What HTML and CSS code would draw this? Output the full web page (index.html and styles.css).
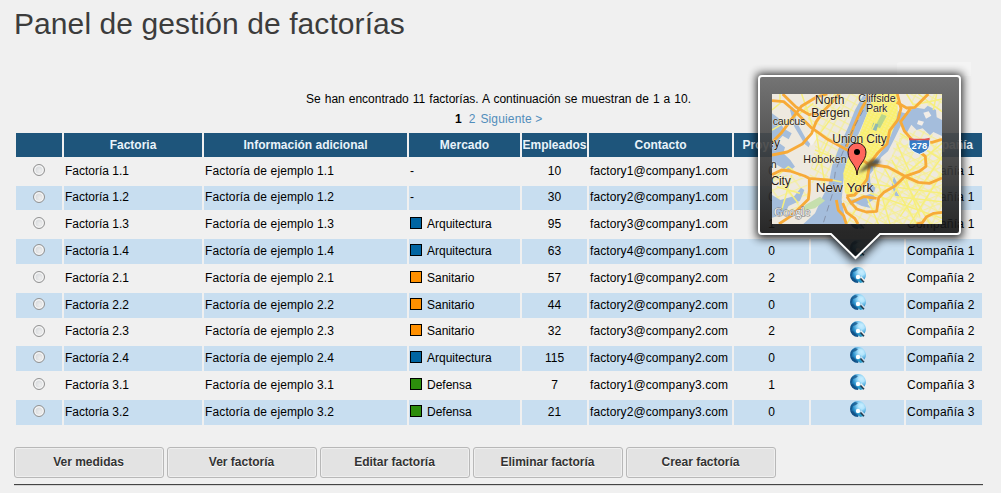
FILE: index.html
```
<!DOCTYPE html>
<html lang="es">
<head>
<meta charset="utf-8">
<title>Panel de gestión de factorías</title>
<link rel="stylesheet" href="styles.css">
</head>
<body>
<svg class="defs" width="0" height="0" aria-hidden="true">
  <defs>
    <radialGradient id="sphere" cx=".72" cy=".3" r=".8">
      <stop offset="0" stop-color="#d4f3ff"/><stop offset=".35" stop-color="#8ed2f4"/><stop offset=".65" stop-color="#2b91cc"/><stop offset="1" stop-color="#063f76"/>
    </radialGradient>
    <symbol id="globe" viewBox="0 0 16 16">
      <path d="M8 0a8 8 0 0 1 6.500 12.500L11 9 8 16A8 8 0 0 1 8 0z" fill="url(#sphere)"/>
      <path d="M1 4 5 1l3 1-2 2-3 1-1 3-1 1zM1 11l2-1 3 3 2 2-4-1z" fill="#124f83" opacity=".7"/>
      <path d="M9 2l4 1 2 4-3 2-4-3z" fill="#bdeaff" opacity=".65"/>
      <path d="M7 12 10 16 14 15 10 11z" fill="#2a9ccd"/>
      <circle cx="8" cy="10" r="2.200" fill="#fff"/>
      <path d="M10.500 11.500 14 15.200" stroke="#263a4b" stroke-width="1.500"/>
    </symbol>
  </defs>
</svg>
<main class="page">
  <h1 class="title">Panel de gestión de factorías</h1>
  <p class="summary">Se han encontrado 11 factorías. A continuación se muestran de 1 a 10.</p>
  <nav class="pager"><b>1</b><a>2</a><a>Siguiente &gt;</a></nav>
  <table class="grid">
    <colgroup><col class="c-radio"><col class="c-name"><col class="c-info"><col class="c-market"><col class="c-staff"><col class="c-mail"><col class="c-projects"><col class="c-place"><col class="c-company"></colgroup>
    <thead><tr><th></th><th>Factoria</th><th>Información adicional</th><th>Mercado</th><th>Empleados</th><th>Contacto</th><th>Proyectos</th><th></th><th>Compañía</th></tr></thead>
    <tbody>
      <tr><td><input type="radio" name="f"></td><td>Factoría 1.1</td><td>Factoría de ejemplo 1.1</td><td>-</td><td>10</td><td>factory1@company1.com</td><td>0</td><td><svg class="globe"><use href="#globe"/></svg></td><td>Compañía 1</td></tr>
      <tr class="short"><td><input type="radio" name="f"></td><td>Factoría 1.2</td><td>Factoría de ejemplo 1.2</td><td>-</td><td>30</td><td>factory2@company1.com</td><td>0</td><td><svg class="globe"><use href="#globe"/></svg></td><td>Compañía 1</td></tr>
      <tr><td><input type="radio" name="f"></td><td>Factoría 1.3</td><td>Factoría de ejemplo 1.3</td><td><i class="swatch blue"></i>Arquitectura</td><td>95</td><td>factory3@company1.com</td><td>1</td><td><svg class="globe"><use href="#globe"/></svg></td><td>Compañía 1</td></tr>
      <tr><td><input type="radio" name="f"></td><td>Factoría 1.4</td><td>Factoría de ejemplo 1.4</td><td><i class="swatch blue"></i>Arquitectura</td><td>63</td><td>factory4@company1.com</td><td>0</td><td><svg class="globe"><use href="#globe"/></svg></td><td>Compañía 1</td></tr>
      <tr><td><input type="radio" name="f"></td><td>Factoría 2.1</td><td>Factoría de ejemplo 2.1</td><td><i class="swatch orange"></i>Sanitario</td><td>57</td><td>factory1@company2.com</td><td>2</td><td><svg class="globe"><use href="#globe"/></svg></td><td>Compañía 2</td></tr>
      <tr><td><input type="radio" name="f"></td><td>Factoría 2.2</td><td>Factoría de ejemplo 2.2</td><td><i class="swatch orange"></i>Sanitario</td><td>44</td><td>factory2@company2.com</td><td>0</td><td><svg class="globe"><use href="#globe"/></svg></td><td>Compañía 2</td></tr>
      <tr class="short"><td><input type="radio" name="f"></td><td>Factoría 2.3</td><td>Factoría de ejemplo 2.3</td><td><i class="swatch orange"></i>Sanitario</td><td>32</td><td>factory3@company2.com</td><td>2</td><td><svg class="globe"><use href="#globe"/></svg></td><td>Compañía 2</td></tr>
      <tr><td><input type="radio" name="f"></td><td>Factoría 2.4</td><td>Factoría de ejemplo 2.4</td><td><i class="swatch blue"></i>Arquitectura</td><td>115</td><td>factory4@company2.com</td><td>0</td><td><svg class="globe"><use href="#globe"/></svg></td><td>Compañía 2</td></tr>
      <tr><td><input type="radio" name="f"></td><td>Factoría 3.1</td><td>Factoría de ejemplo 3.1</td><td><i class="swatch green"></i>Defensa</td><td>7</td><td>factory1@company3.com</td><td>1</td><td><svg class="globe"><use href="#globe"/></svg></td><td>Compañía 3</td></tr>
      <tr><td><input type="radio" name="f"></td><td>Factoría 3.2</td><td>Factoría de ejemplo 3.2</td><td><i class="swatch green"></i>Defensa</td><td>21</td><td>factory2@company3.com</td><td>0</td><td><svg class="globe"><use href="#globe"/></svg></td><td>Compañía 3</td></tr>
    </tbody>
  </table>
  <div class="actions">
    <button>Ver medidas</button><button>Ver factoría</button><button>Editar factoría</button><button>Eliminar factoría</button><button>Crear factoría</button>
  </div>
</main>
<aside class="popup">
  <svg class="bubble" width="240" height="215" viewBox="740 60 240 215">
    <defs>
      <linearGradient id="glass" x1="0" y1="76" x2="0" y2="259" gradientUnits="userSpaceOnUse">
        <stop offset="0" stop-color="#686868"/><stop offset=".85" stop-color="#141414"/><stop offset="1" stop-color="#101010"/>
      </linearGradient>
      <filter id="soft" x="-20%" y="-20%" width="140%" height="140%"><feGaussianBlur stdDeviation="5"/></filter>
      <mask id="outside" maskUnits="userSpaceOnUse" x="740" y="60" width="240" height="215"><path d="M740 60h240v215H740z" fill="#fff"/><path d="M762 76H957q3 0 3 3V231q0 3-3 3H880L855.500 258 831 234H762q-3 0-3-3V79q0-3 3-3z" fill="#000"/></mask>
    </defs>
    <path d="M897 76V64q0-2 3-2h71v14z" fill="#fff" opacity=".25"/>
    <g mask="url(#outside)"><path d="M758 75H961V237H881L855.500 262 830 237H758z" fill="#000" stroke="#000" stroke-width="2" opacity=".9" filter="url(#soft)"/></g>
    <path d="M762 76H957q3 0 3 3V231q0 3-3 3H880L855.500 258 831 234H762q-3 0-3-3V79q0-3 3-3z" fill="url(#glass)" fill-opacity=".91"/>
    <path d="M762 76H957q3 0 3 3V231q0 3-3 3H880L855.500 258 831 234H762q-3 0-3-3V79q0-3 3-3z" fill="none" stroke="#fff" stroke-width="2"/>
  </svg>
  <svg class="map" width="170" height="130" viewBox="96 132 510 390">
    <defs>
      <pattern id="blocks" width="25" height="21" patternUnits="userSpaceOnUse" patternTransform="rotate(28)"><path d="M0 2h25M3 0v21" stroke="#f5ef8c" stroke-width="3" fill="none"/></pattern>
      <pattern id="blocks2" width="37" height="25" patternUnits="userSpaceOnUse" patternTransform="rotate(-22) skewX(15)"><path d="M0 2h37M3 0v25" stroke="#f6f08a" stroke-width="3" fill="none"/></pattern>
      <pattern id="dense" width="11" height="9" patternUnits="userSpaceOnUse" patternTransform="rotate(28)"><path d="M0 2h11M3 0v9" stroke="#faf06a" stroke-width="4" fill="none"/></pattern>
      <filter id="blur"><feGaussianBlur stdDeviation="4"/></filter>
    </defs>
    <path class="land" d="M96 132h510v390H96z"/>
    <path d="M225 132H375L330 235 275 345 255 410 205 395 225 290 215 235 190 170z" fill="url(#blocks)"/>
    <path d="M96 370 200 385 205 440 170 480 96 500z" fill="url(#blocks2)"/>
    <path class="water" d="M372 132H402L384 185 350 265 318 340 309 400 305 450 318 522H190L225 490 243 450 265 405 277 345 300 285 325 230 345 180z"/>
    <path class="water" d="M96 190 116 205 130 235 155 250 146 268 128 257 112 275 135 292 130 310 151 330 165 350 145 365 112 345 96 340zM96 435l25 15 42-12 20-25 10 7-13 32-34 16-13 25-37 10zM150 180l8-8 14 48 25 45 18 5-9 22-12-10-31-52z"/>
    <path d="M195 465 240 440 255 452 225 475 190 482z" fill="#c6dfad"/>
    <path d="M205 250 223 240 232 262 215 287 202 270z" fill="#f4f2ef"/>
    <path d="M402 132H470L474 198 448 268 420 308 391 348 375 415 344 440 315 430 310 370 325 320 360 250z" fill="#f7ee91"/>
    <path d="M402 132H470L474 198 448 268 420 308 391 348 375 415 344 440 315 430 310 370 325 320 360 250z" fill="url(#dense)"/>
    <path d="M425 192 440 198 420 235 406 228z" fill="#b9d68b"/><path d="M400 218l15 5-6 20-15-5z" fill="#8fb8b3"/>
    <path d="M510 132H606V180L550 165 520 180zM500 250 540 238 606 265V522H330L305 440 380 430 405 348 455 320 465 262z" fill="url(#blocks)"/>
    <path d="M480 255 606 280V522H420L410 430 450 390z" fill="url(#blocks2)"/>
    <path class="water" d="M474 184 504 192 520 172 553 177 563 167 588 180 590 202 606 210V258L580 246 570 256 548 235 530 240 514 224 499 251 483 226 463 267 444 304 424 321 409 349 390 373 391 398 406 413 401 431 383 420 377 386 386 351 417 316 447 271 466 221z"/>
    <path class="water" d="M365 440 397 430 407 445 382 461 392 474 365 468 345 458 332 465 323 450 343 448zM462 380l10 20-5 20 12 20-14-3-10-34z"/>
    <path d="M550 188 566 184 574 197 558 206zM535 211 552 215 546 227 531 222z" fill="#f3eee8"/>
    <g class="local">
      <path d="M96 180 120 160 120 132M96 390 145 350 182 380M110 410 180 430M112 380 175 460M125 480 155 375M96 240 180 190 220 160M185 132 220 235 285 132M240 250 300 170M228 245 255 405M225 300 275 320M265 270 225 360M250 385 305 396M315 396 380 404M345 330 380 405M400 350 450 522M395 402 606 430M390 430 606 505M430 350 530 522M455 330 570 522M495 380 540 500M470 280 520 390M480 250 606 330M606 280 500 370 430 480M606 320 480 500M606 370 510 522M350 475 320 522M380 440 415 522M470 440 606 455M500 132 520 165 606 147M535 132 606 185M590 132 580 180M440 132 400 230 350 330"/>
    </g>
    <g class="highway">
      <path d="M96 152 131 155 164 183 214 233 263 268 320 299 385 342 444 351 495 379 535 397 568 400 606 384"/>
      <path d="M96 277 123 250 154 209 184 169 230 141 262 132"/>
      <path d="M128 132 168 171 208 194 234 190"/>
      <path d="M96 315 142 306 187 282 215 250 228 216 250 184 283 150 298 132"/>
      <path d="M96 374 125 360 150 363 194 378 207 385 278 391M208 384 208 421 205 448 181 472 150 500 117 522"/>
      <path d="M389 132 363 180 342 228 319 291"/>
      <path d="M472 132 483 175 474 209 449 242 441 282 414 308 390 339 381 388 344 435 319 438"/>
      <path d="M470 157 500 174 525 172 565 132M514 173 482 215 493 243 521 275 541 307 556 319 558 349 538 364 495 379 465 408 432 427 416 443 410 484 379 486 350 477 332 457 321 440M410 445 371 440 332 458"/>
      <path d="M289 450 295 481 311 497 319 522M308 459 320 487 344 505 354 522M606 487 581 490 560 500 547 518 530 522M606 268 576 277 550 275"/>
    </g>
    <path d="M370 180 329 258 301 324 286 365 278 430 249 522" fill="none" stroke="#777d91" stroke-width="2" stroke-dasharray="20 14"/>
    <g class="labels">
      <text x="225" y="161" textLength="88">North</text><text x="214" y="200" textLength="115">Bergen</text>
      <text class="small" x="355" y="155" textLength="112">Cliffside</text><text class="small" x="378" y="187" textLength="64">Park</text>
      <text class="small" x="98" y="226" textLength="98">caucus</text><text x="82" y="290">ey</text>
      <text x="277" y="279" textLength="163">Union City</text><text class="small" x="190" y="340" textLength="130">Hoboken</text>
      <text class="small" x="92" y="353">n</text><text x="92" y="406" textLength="60">City</text><text class="large" x="227" y="426" textLength="173">New York</text>
    </g>
    <path d="M507 266q30 8 62 0v19q-2 18-31 28-29-10-31-28z" fill="#377bc5" stroke="#e9f5ff" stroke-width="3"/><path d="M507 263q31 7 62 0v8h-62z" fill="#e4524e"/><text x="538" y="298" text-anchor="middle" class="shield">278</text>
    <path d="M353 370 388 333 407 326 424 335 403 350 373 362z" fill="#44412d" opacity=".8" filter="url(#blur)"/>
    <path d="M351 375C349 341 324 336 324 306a27 27 0 0 1 54 0c0 30-25 35-27 69z" fill="#ff665c" stroke="#251312" stroke-width="3"/><circle cx="351" cy="306" r="9"/>
    <text class="brand" x="102" y="499" textLength="109" lengthAdjust="spacingAndGlyphs">Google</text>
  </svg>
</aside>
</body>
</html>
```
FILE: styles.css
```
* { box-sizing: border-box; }
body { margin: 0; width: 1001px; height: 493px; overflow: hidden; background: #f0f0f0; color: #000; font: 12px/14px "Liberation Sans", Arial, sans-serif; }
.defs { position: absolute; }
.page { padding: 7px 17px 0 14px; }
.title { margin: 0; height: 85px; font-size: 30px; line-height: 34px; font-weight: 400; letter-spacing: .08px; color: #3c3c3c; }
.summary { width: 385px; height: 14px; margin: 0 auto 6px 292px; text-align: justify; text-align-last: justify; white-space: nowrap; }
.pager { display: flex; gap: 7px; height: 19px; padding-left: 441px; }
.pager a { color: #518dbb; }
.pager a + a { margin-left: -2px; letter-spacing: .15px; }
.grid { width: 970px; table-layout: fixed; border-collapse: separate; border-spacing: 2px; }
.c-radio { width: 46px; } .c-name { width: 138px; } .c-info { width: 203px; }
.c-market { width: 111px; } .c-staff { width: 65px; } .c-mail { width: 143px; }
.c-projects { width: 75px; } .c-place { width: 93px; } .c-company { width: 76px; }
.grid th, .grid td { padding: 0 1px; white-space: nowrap; overflow: hidden; }
.grid th { height: 24px; padding: 0; background: #1e557b; color: #e9f3fa; font-weight: 700; }
.grid td { height: 25px; padding-bottom: 2px; line-height: 14px; }
.grid .short td { height: 24px; }
.grid tbody tr:nth-child(even) td { background: #c8def0; }
.grid td:nth-child(1), .grid td:nth-child(5), .grid td:nth-child(7), .grid td:nth-child(8) { text-align: center; }
.grid tbody td:nth-child(1) { padding-bottom: 3px; }
.grid td:nth-child(3) { letter-spacing: .13px; }
.grid td:nth-child(6) { letter-spacing: .09px; }
.grid td:nth-child(9) { letter-spacing: .22px; }
.grid tbody td:nth-child(8) { padding-bottom: 7px; }
.grid input { appearance: none; display: block; width: 12px; height: 12px; margin: 0 auto; border: 1px solid #929292; border-radius: 50%; background: radial-gradient(circle at 60% 60%, #eee, #c8cdd2); box-shadow: inset 0 0 0 1.5px #f5f5f5; }
.swatch { display: inline-block; width: 12px; height: 12px; margin-right: 5px; border: 1px solid #000; vertical-align: -1px; }
.blue { background: #0065a2; } .orange { background: #ff9000; } .green { background: #2c8d0c; }
.globe { display: block; width: 16px; height: 16px; margin: 0 auto; }
.actions { display: flex; gap: 3px; width: 969px; height: 38px; margin-top: 20px; border-bottom: 1px solid #454545; box-shadow: 0 1px #d5d5d5; }
.actions button { width: 150px; height: 31px; padding: 0 1px 2px 0; border: 1px solid #b8b8b8; border-radius: 3px; background: #e3e3e3; color: #333; font: bold 12px "Liberation Sans", Arial, sans-serif; box-shadow: inset 0 0 0 1px #efefef; text-shadow: 0 1px #fff; }
.popup { position: absolute; left: 740px; top: 60px; width: 240px; height: 215px; }
.bubble { display: block; }
.map { position: absolute; left: 32px; top: 34px; display: block; }
.land { fill: #eee9df; } .water { fill: #a4bddc; }
.local { fill: none; stroke: #f6ee7c; stroke-width: 4.5; }
.highway { fill: none; stroke: #f7aa38; stroke-width: 8.5; stroke-linejoin: round; }
.labels { font-family: "Liberation Sans", Arial, sans-serif; font-size: 36px; fill: #2a1c18; paint-order: stroke; stroke: #fff8df; stroke-width: 2px; }
.labels .small { font-size: 32px; } .labels .large { font-size: 41px; }
.shield { font: bold 28px "Liberation Sans", Arial, sans-serif; fill: #fff; }
.brand { font: 38px "Liberation Serif", serif; fill: #f4f4f0; stroke: #77777a; stroke-width: 3px; paint-order: stroke; }
```
